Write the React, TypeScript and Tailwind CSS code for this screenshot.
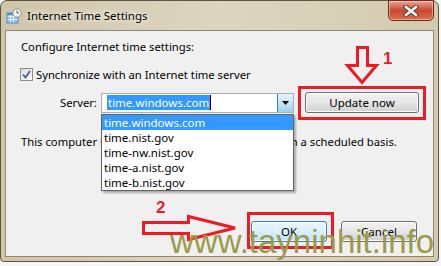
import React from 'react';

const servers = ['time.windows.com', 'time.nist.gov', 'time-nw.nist.gov', 'time-a.nist.gov', 'time-b.nist.gov'];

const ui = { fontFamily: '"Noto Sans", "Open Sans", sans-serif' };

const WinButton = ({ label, focused, className }: { label: string; focused?: boolean; className: string }) => (
    <div
        className={`flex items-center justify-center rounded-[3px] border text-[11.5px] text-black ${focused ? 'border-[#3c7fb1] bg-gradient-to-b from-[#eaf6fd] via-[#d9f0fc] to-[#bee6fd]' : 'border-[#707070] bg-gradient-to-b from-[#f2f2f2] via-[#e6e6e6] to-[#d0d0d0]'} shadow-[inset_0_0_0_1px_#fcfcfc] ${className}`}
    >
        {label}
    </div>
);

const TitleIcon = () => (
    <svg width="16" height="16" viewBox="0 0 16 16">
        <rect x="1" y="5" width="11" height="10" fill="#8fc3ee" stroke="#4f8cc9" />
        <path d="M1.5 8.5H11.5M1.5 11.5H11.5M4.5 5.5V14.5M7.5 5.5V14.5" stroke="#e8f3fc" strokeWidth="1" />
        <rect x="1" y="5" width="11" height="2" fill="#4f8cc9" />
        <circle cx="11" cy="5" r="4.2" fill="#f4f4f4" stroke="#8d8d8d" />
        <path d="M11 2.6V5H13" stroke="#555" strokeWidth="1" fill="none" />
    </svg>
);

const CloseButton = () => (
    <div className="-mt-px ml-auto mr-[4px] flex h-[21px] w-[46px] items-center justify-center rounded-b-[5px] border border-[#6e2a1f] bg-gradient-to-b from-[#e7a595] via-[#c84631] to-[#d9714f] shadow-[inset_0_0_0_1px_rgba(255,220,210,0.5)]">
        <svg width="16" height="12" viewBox="0 0 16 12">
            <path d="M3 2L13 10M13 2L3 10" stroke="#5a3a30" strokeWidth="4.5" strokeLinecap="square" />
            <path d="M3 2L13 10M13 2L3 10" stroke="#ffffff" strokeWidth="2.6" strokeLinecap="square" />
        </svg>
    </div>
);

const Checkbox = () => (
    <div className="flex h-[13px] w-[13px] items-center justify-center border border-[#8e8f8f] bg-gradient-to-br from-[#dcdcdc] to-[#fbfbfb]">
        <svg width="9" height="9" viewBox="0 0 9 9">
            <path d="M1 4.5L3.5 7.5L8 1" stroke="#4a5f97" strokeWidth="1.8" fill="none" />
        </svg>
    </div>
);

export default function App() {
    return (
        <div className="relative h-[266px] w-[441px] overflow-hidden bg-[#f7f7f7]" style={ui}>
            {/* window */}
            <div className="flex h-[262px] w-[439px] flex-col rounded-t-[7px] rounded-b-[4px] border border-[#5b5446] bg-gradient-to-r from-[#cfc5a9] via-[#ddd5c1] to-[#d3caaf]">
                <div className="flex h-[29px] items-start">
                    <div className="ml-[5px] mt-[7px]">
                        <TitleIcon />
                    </div>
                    <div className="ml-[5px] mt-[7px] text-[11.5px] leading-[16px] text-black [text-shadow:0_0_8px_#fffbee,0_0_4px_#fffbee]">
                        Internet Time Settings
                    </div>
                    <CloseButton />
                </div>

                <div className="relative mx-[4px] flex h-[227px] flex-col border border-[#8c8674] bg-[#f0f0f0] text-[11.25px] text-black">
                    <div className="ml-[15px] mt-[8px] leading-[15px]">Configure Internet time settings:</div>

                    <div className="ml-[14px] mt-[12px] flex h-[16px] items-center gap-[3px]">
                        <Checkbox />
                        <span className="leading-[15px]">Synchronize with an Internet time server</span>
                    </div>

                    <div className="mt-[10px] flex h-[21px] items-center">
                        <span className="ml-[54px] w-[41px] leading-[15px]">Server:</span>
                        <div className="flex h-[20px] w-[193px] border border-[#abadb3] bg-white">
                            <div className="flex flex-1 items-center pl-[5px]">
                                <span className="bg-[#3399ff] px-px text-[11.5px] leading-[15px] text-white">time.windows.com</span>
                                <span className="h-[15px] w-px bg-black" />
                            </div>
                            <div className="flex w-[16px] items-center justify-center border-l border-[#3c7fb1] bg-gradient-to-b from-[#e5f4fc] via-[#c4e5f6] to-[#98d1ef]">
                                <svg width="7" height="4" viewBox="0 0 7 4">
                                    <path d="M0 0H7L3.5 4Z" fill="#000" />
                                </svg>
                            </div>
                        </div>
                        <WinButton label="Update now" className="ml-[11px] h-[21px] w-[114px]" />
                    </div>

                    <div className="ml-[15px] mt-[21px] leading-[15px]">
                        This computer is set to automatically synchronize on a scheduled basis.
                    </div>

                    <div className="flex-1" />

                    <div className="mb-[14px] flex justify-end gap-[14px] pr-[16px]">
                        <WinButton label="OK" focused className="h-[21px] w-[76px]" />
                        <WinButton label="Cancel" className="h-[21px] w-[76px]" />
                    </div>

                    {/* open dropdown list */}
                    <div className="absolute left-[95px] top-[83px] w-[193px] border border-[#646464] bg-white text-[11.5px] shadow-[2px_2px_2px_rgba(0,0,0,0.3)]">
                        {servers.map((s, i) => (
                            <div
                                key={s}
                                className={`h-[15px] pl-[2px] leading-[15px] ${i === 0 ? 'bg-[#3399ff] text-white' : 'text-black'}`}
                            >
                                {s}
                            </div>
                        ))}
                    </div>
                </div>
            </div>

            {/* annotations */}
            <svg className="absolute left-0 top-0" width="441" height="266" viewBox="0 0 441 266">
                <g fill="none" stroke="#ed1c24" strokeWidth="3">
                    <rect x="299.5" y="87.5" width="125" height="31" />
                    <rect x="248.5" y="213.5" width="84" height="34" />
                    <path d="M357.5 47.5H367.5V65.5H376.5L362 82.5L347.5 65.5H357.5Z" />
                    <path d="M143.5 222.5H188.5V216.5L235 228L188.5 239.5V233.5H143.5Z" />
                </g>
            </svg>
            <div className="absolute left-[383px] top-[49px] text-[17px] font-bold leading-[20px] text-[#e31e30]" style={{ fontFamily: '"Liberation Sans", Arial, sans-serif' }}>
                1
            </div>
            <div className="absolute left-[156px] top-[198px] text-[17px] font-bold leading-[20px] text-[#e31e30]" style={{ fontFamily: '"Liberation Sans", Arial, sans-serif' }}>
                2
            </div>
            <div className="absolute left-[170px] top-[225px] text-[33px] leading-[33px] text-[#9c9a4c]" style={{ fontFamily: '"Liberation Sans", Arial, sans-serif' }}>
                www.tayninhit.info
            </div>
        </div>
    );
}
